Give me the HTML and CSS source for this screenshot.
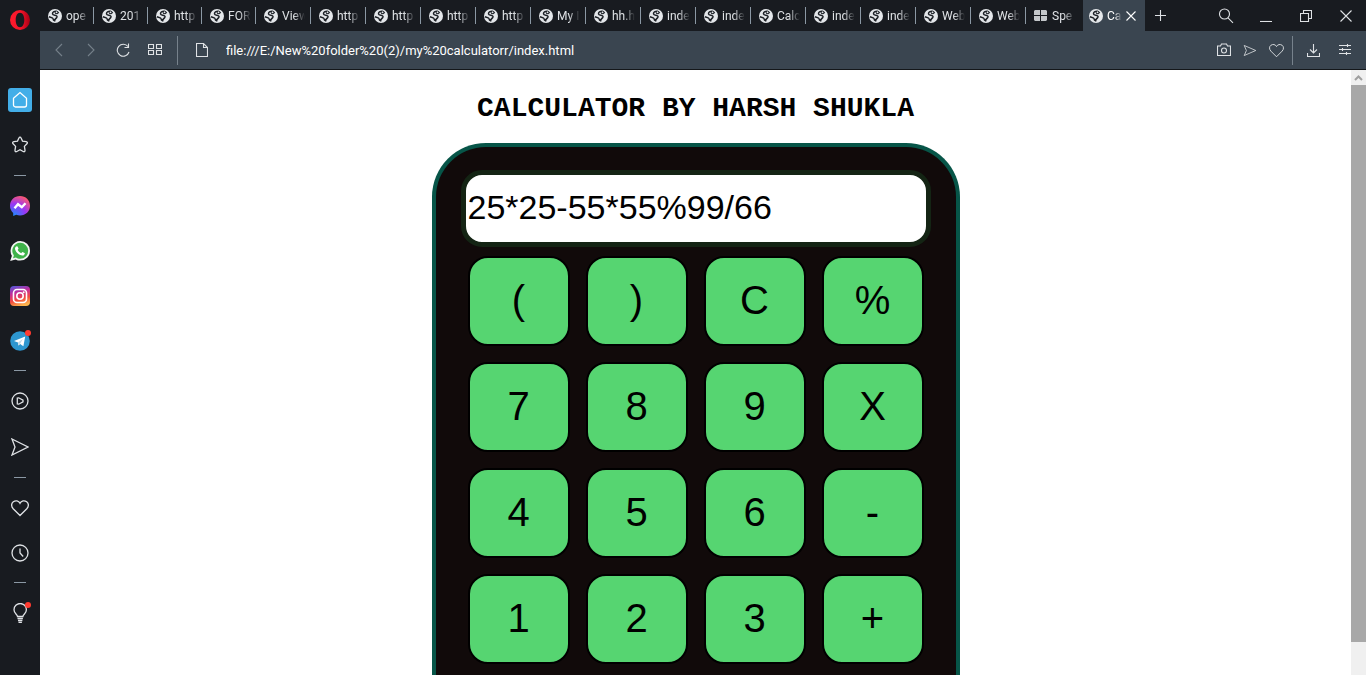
FILE: index.html
```html
<!DOCTYPE html>
<html lang="en">
<head>
<meta charset="utf-8">
<title>Calculator</title>
<link rel="stylesheet" href="styles.css">
</head>
<body>
<svg class="defs" aria-hidden="true">
  <symbol id="globe" viewBox="0 0 14 14">
    <circle cx="7" cy="7" r="7" fill="#e4e7ea"/>
    <path d="M8.300 2.200C6 2.400 4.300 3.200 4.500 4.900c.2 1.500 2 1.200 3.300 1.500 1.500.4 1.500 1.700.7 2.500-.9.900-1.700 1.200-1.900 2.900-.8-.3-1.500-1-1.500-2C5 8.700 3.200 8.500.9 7.700" fill="none" stroke="#1c2026" stroke-width="1.500"/>
    <path d="M8 1.600c1.500.2 2.400 1 3.200 2.200l-2 1.400-1.800-.2-.8-1.500z" fill="#1c2026"/>
    <path d="M8.300 2.300l1.400.9-1 1-1.300-.6z" fill="#e4e7ea"/>
  </symbol>
  <symbol id="grid" viewBox="0 0 14 12">
    <path d="M1 0h5v5H0V1zM7 0h5l1 1v4H7zM0 6h6v5H1l-1-1zM7 6h6v4l-1 1H7z" fill="#c4c7ca"/>
  </symbol>
  <symbol id="heart" viewBox="0 0 18 18">
    <path d="M9 16.500 2.200 9.700C0 7.300.2 4.200 2.300 2.700 4.500 1.200 7.700 1.500 9 4.300c1.300-2.800 4.500-3.100 6.700-1.600 2.100 1.500 2.300 4.600.1 7z"/>
  </symbol>
  <symbol id="send" viewBox="0 0 18 18">
    <path d="M1 1l16 8-16 8 3-8z"/>
  </symbol>
</svg>
<div class="browser">
  <nav class="sidebar" aria-label="Sidebar">
    <button class="opera" aria-label="Menu"><svg width="20" height="20" viewBox="0 0 20 20"><defs><linearGradient id="og" x2="1"><stop offset="0" stop-color="#ff1b2d"/><stop offset=".55" stop-color="#f4142a"/><stop offset="1" stop-color="#a70014"/></linearGradient></defs><path fill-rule="evenodd" fill="url(#og)" d="M10 0a10 10 0 1 0 0 20 10 10 0 0 0 0-20zm0 2.800c2.800 0 4.300 3.200 4.300 7.200s-1.500 7.200-4.300 7.200S5.700 14 5.700 10 7.200 2.800 10 2.800z"/></svg></button>
    <button class="slot" aria-label="Home"><span class="tile"><svg class="line" width="18" height="18" viewBox="0 0 18 18"><path d="M2.500 7.200 9 1.500l6.500 5.700v6.800a2 2 0 0 1-2 2h-9a2 2 0 0 1-2-2z"/></svg></span></button>
    <button class="slot tall" aria-label="Bookmarks"><svg class="line" width="18" height="18" viewBox="0 0 18 18"><path d="M9 1.200c.6 0 .9.400 1.100.9l1.400 3 3.600.6c1.400.3 1.700 1.200.8 2.100l-2.500 2.600.6 3.700c.2 1.400-.6 2-1.800 1.400L9 13.800l-3.200 1.700c-1.200.600-2 0-1.800-1.400l.6-3.700-2.500-2.600c-.9-.9-.6-1.800.8-2.100l3.600-.6 1.400-3c.2-.5.500-.9 1.100-.9z"/></svg></button>
    <span class="dash"></span>
    <button class="slot" aria-label="Messenger"><svg width="20" height="20" viewBox="0 0 20 20"><defs><radialGradient id="mg" cx=".2" cy="1" r="1.100"><stop offset="0" stop-color="#1b8cff"/><stop offset=".55" stop-color="#9a35f5"/><stop offset="1" stop-color="#ff5b6b"/></radialGradient></defs><path fill="url(#mg)" d="M10 0C4.300 0 0 4.100 0 9.700 0 12.800 1.200 15 3.200 16.900V20l3-1.300c1.200.4 2.500.7 3.800.7 5.700 0 10-4.100 10-9.700S15.700 0 10 0z"/><path d="M4.500 12.300 8 8.200l3.800 3 3.700-4" fill="none" stroke="#fff" stroke-width="2.400"/></svg></button>
    <button class="slot" aria-label="WhatsApp"><svg width="20" height="20" viewBox="0 0 20 20"><path fill="#f2f5f2" d="M10.200 0a9.800 9.800 0 0 1 0 19.600c-1.700 0-3.200-.4-4.600-1.200L.2 20l1.700-5.200A9.800 9.800 0 0 1 10.200 0z"/><path fill="#3fb34a" d="M10.200 1.800a8 8 0 0 1 0 16c-1.600 0-3.100-.5-4.300-1.300l-2.900.8.9-2.800A8 8 0 0 1 10.200 1.800z"/><path fill="#fff" d="M7 5.200c.5 0 .6.200.8.700l.7 1.600c.1.400-.9 1.300-.8 1.600.8 1.500 2 2.500 3.400 3.100.4.100 1.100-1.300 1.500-1.200l1.900.9c.4.200.4.500.3.900-.3 1.200-1.500 1.900-2.600 1.800C8.800 14.200 5 10.500 5 7.600c0-1 .9-2.400 2-2.400z"/></svg></button>
    <button class="slot" aria-label="Instagram"><svg width="20" height="20" viewBox="0 0 20 20"><defs><linearGradient id="ig" x1=".2" y1="0" x2=".5" y2="1"><stop offset="0" stop-color="#5a55d6"/><stop offset=".35" stop-color="#c52d9a"/><stop offset=".7" stop-color="#f34b3e"/><stop offset="1" stop-color="#fdb44b"/></linearGradient></defs><rect width="20" height="20" rx="4" fill="url(#ig)"/><g fill="none" stroke="#fff" stroke-width="1.600"><rect x="3.500" y="3.500" width="13" height="13" rx="3.500"/><circle cx="10" cy="10" r="3.200"/></g><circle cx="13.700" cy="6.300" r="1" fill="#fff"/></svg></button>
    <button class="slot" aria-label="Telegram"><span class="badged"><svg width="20" height="20" viewBox="0 0 20 20"><circle cx="10" cy="10" r="9.800" fill="#2d96cf"/><path fill="#fff" d="m4 10 11.200-4.500-1.800 9.700-3.300-2.300-1.700 1.700-.4-3z"/><path d="m8 11.600 5-3.800-3 5.100-1.600 1.700z" fill="#c6dcea"/></svg></span></button>
    <span class="dash"></span>
    <button class="slot tall" aria-label="Player"><svg class="line" width="18" height="18" viewBox="0 0 18 18"><circle cx="9" cy="9" r="8"/><path d="M6.300 6v6l1.400.2L12 9.800V8.200L7.700 5.800z"/></svg></button>
    <button class="slot tall" aria-label="My Flow"><svg class="line" width="18" height="18"><use href="#send"/></svg></button>
    <span class="dash"></span>
    <button class="slot" aria-label="Personal news"><svg class="line" width="18" height="18"><use href="#heart"/></svg></button>
    <button class="slot" aria-label="History"><svg class="line" width="18" height="18" viewBox="0 0 18 18"><circle cx="9" cy="9" r="8"/><path d="M9 4.500V9l3.200 3.500"/></svg></button>
    <span class="dash"></span>
    <button class="slot tall" aria-label="Tips"><span class="badged"><svg class="line" width="20" height="20" viewBox="0 0 20 20"><path d="M7.500 13.500c0-2-3.500-3-3.500-6.800a6.200 6.200 0 0 1 12.400 0c0 3.800-3.500 4.800-3.500 6.800zM7.500 15.500h5.400M8 17.500h4.400M8.500 19.500h3.400"/></svg></span></button>
  </nav>

  <div class="main">
    <div class="tabstrip">
      <div class="tabs">
        <button class="tab short"><svg width="14" height="14"><use href="#globe"/></svg><span>ope</span></button>
        <button class="tab short"><svg width="14" height="14"><use href="#globe"/></svg><span>201</span></button>
        <button class="tab short"><svg width="14" height="14"><use href="#globe"/></svg><span>http</span></button>
        <button class="tab short"><svg width="14" height="14"><use href="#globe"/></svg><span>FOR</span></button>
        <button class="tab"><svg width="14" height="14"><use href="#globe"/></svg><span>View</span></button>
        <button class="tab"><svg width="14" height="14"><use href="#globe"/></svg><span>http</span></button>
        <button class="tab"><svg width="14" height="14"><use href="#globe"/></svg><span>http</span></button>
        <button class="tab"><svg width="14" height="14"><use href="#globe"/></svg><span>http</span></button>
        <button class="tab"><svg width="14" height="14"><use href="#globe"/></svg><span>http</span></button>
        <button class="tab"><svg width="14" height="14"><use href="#globe"/></svg><span>My I</span></button>
        <button class="tab"><svg width="14" height="14"><use href="#globe"/></svg><span>hh.h</span></button>
        <button class="tab"><svg width="14" height="14"><use href="#globe"/></svg><span>inde</span></button>
        <button class="tab"><svg width="14" height="14"><use href="#globe"/></svg><span>inde</span></button>
        <button class="tab"><svg width="14" height="14"><use href="#globe"/></svg><span>Calc</span></button>
        <button class="tab"><svg width="14" height="14"><use href="#globe"/></svg><span>inde</span></button>
        <button class="tab"><svg width="14" height="14"><use href="#globe"/></svg><span>inde</span></button>
        <button class="tab"><svg width="14" height="14"><use href="#globe"/></svg><span>Web</span></button>
        <button class="tab"><svg width="14" height="14"><use href="#globe"/></svg><span>Web</span></button>
        <button class="tab last"><svg width="14" height="12"><use href="#grid"/></svg><span>Spe</span></button>
        <div class="tab active"><svg width="14" height="14"><use href="#globe"/></svg><span>Ca</span><button class="close" aria-label="Close tab"><svg class="line" width="10" height="10" viewBox="0 0 10 10"><path d="m.5.500 9 9M9.500.5l-9 9"/></svg></button></div>
        <button class="new" aria-label="New tab"><svg class="line" width="12" height="12" viewBox="0 0 12 12"><path d="M5.500 0v11M0 5.500h11"/></svg></button>
      </div>
      <div class="window">
        <button aria-label="Search tabs"><svg class="line" width="16" height="16" viewBox="0 0 16 16"><circle cx="6.500" cy="6" r="5"/><path d="m10 9.800 5 5"/></svg></button>
        <button aria-label="Minimise"><svg class="line" width="12" height="12" viewBox="0 0 12 12"><path d="M0 11.500h12"/></svg></button>
        <button aria-label="Restore"><svg class="line" width="12" height="12" viewBox="0 0 12 12"><path d="M.5 3.500h8v8h-8zM3.500 3.500v-3h8v8h-3"/></svg></button>
        <button aria-label="Close"><svg class="line" width="12" height="12" viewBox="0 0 12 12"><path d="m.5.500 11 11M11.500.5l-11 11"/></svg></button>
      </div>
    </div>

    <div class="toolbar">
      <button class="tool dim" aria-label="Back"><svg class="line" width="8" height="14" viewBox="0 0 8 14"><path d="M7 1 1 7l6 6"/></svg></button>
      <button class="tool dim" aria-label="Forward"><svg class="line" width="8" height="14" viewBox="0 0 8 14"><path d="m1 1 6 6-6 6"/></svg></button>
      <button class="tool" aria-label="Reload"><svg class="line" width="14" height="14" viewBox="0 0 14 14"><path d="M12 3.500A6 6 0 1 0 13 9M12.500.5V4.500h-4"/></svg></button>
      <button class="tool" aria-label="Speed dial"><svg class="line" width="14" height="12" viewBox="0 0 14 12"><path d="M.5.500h5v4h-5zM8.500.5h5v4h-5zM.5 6.500h5v4h-5zM8.500 6.500h5v4h-5z"/></svg></button>
      <span class="rule"></span>
      <svg class="line page-icon" width="12" height="14" viewBox="0 0 12 14"><path d="M.5.500h7l4 4v9H.5zM7.500.5v4h4"/></svg>
      <input class="url" type="text" aria-label="Address" value="file:///E:/New%20folder%20(2)/my%20calculatorr/index.html">
      <div class="actions">
        <button aria-label="Snapshot"><svg class="line" width="14" height="14" viewBox="0 0 14 14"><path d="M.5 3h3l1-2h5l1 2h3v9.500H.5z"/><circle cx="7" cy="7.500" r="2.500"/></svg></button>
        <button aria-label="Send to My Flow"><svg class="line" width="14" height="13" viewBox="0 0 18 18"><path d="M1 2l16 7-16 7 3-7z"/></svg></button>
        <button aria-label="Add bookmark"><svg class="line" width="15" height="15"><use href="#heart"/></svg></button>
      </div>
      <span class="rule"></span>
      <button class="download" aria-label="Downloads"><svg class="line" width="13" height="13" viewBox="0 0 13 13"><path d="M6.500 0v9M3 5.500 6.500 9 10 5.500M.5 9v3.500h12V9"/></svg></button>
      <button class="setup" aria-label="Easy setup"><svg class="line" width="12" height="12" viewBox="0 0 12 12"><path d="M0 1.500h12M0 5.500h12M0 9.500h12M8.500 0v3M3.500 4v3M7.500 8v3"/></svg></button>
    </div>

    <div class="viewport">
      <main class="page">
        <h1>CALCULATOR BY HARSH SHUKLA</h1>
        <div class="calculator">
          <input class="screen" type="text" aria-label="Expression" value="25*25-55*55%99/66">
          <div class="keys">
            <button>(</button><button>)</button><button>C</button><button>%</button>
            <button>7</button><button>8</button><button>9</button><button>X</button>
            <button>4</button><button>5</button><button>6</button><button>-</button>
            <button>1</button><button>2</button><button>3</button><button>+</button>
          </div>
        </div>
      </main>
      <div class="scrollbar">
        <button aria-label="Scroll up"><svg width="9" height="6" viewBox="0 0 9 6"><path d="m1 5 3.500-3.500L8 5" fill="none" stroke="#a0a0a0" stroke-width="2"/></svg></button>
        <div class="thumb"></div>
      </div>
    </div>
  </div>
</div>
</body>
</html>
```

FILE: styles.css
```css
* { box-sizing: border-box; }

body {
  margin: 0;
  background: #fff;
  font-family: Roboto, "Noto Sans", sans-serif;
  font-size: 12px;
}

button, input { font: inherit; color: inherit; }

button {
  margin: 0;
  padding: 0;
  border: 0;
  background: none;
}

svg { display: block; flex: none; }
.defs { position: absolute; width: 0; height: 0; }
.line { fill: none; stroke: currentColor; stroke-width: 1.3; }

.browser {
  display: flex;
  height: 100vh;
  overflow: hidden;
}

/* Sidebar */
.sidebar {
  flex: none;
  width: 40px;
  display: flex;
  flex-direction: column;
  background: #181b20;
  color: #dfe2e5;
}

.sidebar button {
  flex: none;
  display: flex;
  align-items: center;
  justify-content: center;
}

.sidebar .opera { height: 40px; margin-bottom: 37px; }
.sidebar .slot { height: 45px; }
.sidebar .tall { height: 46px; }

.dash {
  flex: none;
  height: 15px;
  display: flex;
  align-items: center;
  justify-content: center;
}

.dash::before {
  content: "";
  width: 12px;
  height: 1px;
  background: #8b98a4;
}

.tile {
  width: 24px;
  height: 24px;
  display: flex;
  align-items: center;
  justify-content: center;
  border-radius: 3px;
  background: #43aee8;
  color: #fff;
}

.badged { position: relative; }

.badged::after {
  content: "";
  position: absolute;
  top: -1px;
  right: -1px;
  width: 6px;
  height: 6px;
  border-radius: 50%;
  background: #ff3b30;
}

/* Tabs */
.main {
  flex: 1;
  min-width: 0;
  display: flex;
  flex-direction: column;
}

.tabstrip {
  flex: none;
  height: 31px;
  display: flex;
  justify-content: space-between;
  background: #181b20;
  color: #dfe2e5;
}

.tabs { display: flex; }

.tab {
  position: relative;
  width: 55px;
  padding-left: 8px;
  display: flex;
  align-items: center;
  gap: 4px;
}

.tab span {
  flex: none;
  width: 23px;
  white-space: nowrap;
  text-align: left;
  -webkit-mask-image: linear-gradient(90deg, #000 50%, transparent);
  mask-image: linear-gradient(90deg, #000 50%, transparent);
}

.tab::after {
  content: "";
  position: absolute;
  right: 0;
  top: 7px;
  bottom: 7px;
  width: 1px;
  background: #8b98a4;
}

.tab.short { width: 54px; }
.tab.last { width: 57px; }
.tab.last::after, .tab.active::after { display: none; }

.tab.active {
  width: 62px;
  padding-left: 6px;
  background: #3a4550;
  color: #fff;
}

.tab.active span { width: 15px; }

.new {
  width: 32px;
  display: flex;
  align-items: center;
  justify-content: center;
}

.window { display: flex; }
.window .line, .new .line, .close .line { stroke-width: 1.1; }

.window button {
  width: 40px;
  display: flex;
  align-items: center;
  justify-content: center;
}

/* Address bar */
.toolbar {
  flex: none;
  height: 39px;
  padding: 0 9px 0 3px;
  display: flex;
  align-items: center;
  border-bottom: 1px solid #14171a;
  background: #3a4550;
  color: #dfe2e5;
}

.toolbar .line { stroke-width: 1.1; }

.tool {
  width: 32px;
  display: flex;
  justify-content: center;
}

.toolbar .dim { color: #75808a; }

.rule {
  width: 1px;
  height: 29px;
  background: #77828c;
}

.tool + .rule { margin-left: 6px; }
.page-icon { margin-left: 18px; }

.url {
  flex: 1;
  min-width: 0;
  margin-left: 18px;
  padding: 0;
  border: 0;
  outline: 0;
  background: none;
  color: #fff;
  font-size: 13px;
}

.actions {
  display: flex;
  align-items: center;
  gap: 12px;
  margin-right: 8px;
}

.download, .setup {
  display: flex;
  justify-content: center;
}

.download { width: 40px; }
.setup { width: 24px; }

/* Page */
.viewport {
  flex: 1;
  min-height: 0;
  display: flex;
}

.page {
  flex: 1;
  display: flex;
  flex-direction: column;
  align-items: center;
  overflow: hidden;
  color: #000;
}

h1 {
  margin: 23px 0 18px;
  font: bold 28px/32px "Courier New", "Liberation Mono", monospace;
}

.calculator {
  flex: 1;
  padding: 23px 25px 0;
  display: flex;
  flex-direction: column;
  align-items: center;
  gap: 9px;
  border: 4px solid #075548;
  border-bottom: 0;
  border-radius: 54px 54px 0 0;
  background: #110a0a;
  font-family: "Liberation Sans", Arial, sans-serif;
}

.screen {
  width: 470px;
  height: 77px;
  padding: 0 2px 2px;
  border: 5px solid #142414;
  border-radius: 21px;
  outline: 0;
  background: #fff;
  font-size: 34px;
}

.keys {
  display: grid;
  grid-template-columns: repeat(4, 102px);
  gap: 16px;
}

.keys button {
  height: 90px;
  padding-bottom: 2px;
  border: 2px solid #000;
  border-radius: 20px;
  background: #56d571;
  font-size: 40px;
}

.scrollbar {
  flex: none;
  width: 15px;
  display: flex;
  flex-direction: column;
  background: #f0f0f0;
}

.scrollbar button {
  height: 15px;
  display: flex;
  align-items: center;
  justify-content: center;
}

.thumb {
  height: 92%;
  background: #a8a8a8;
}
```
